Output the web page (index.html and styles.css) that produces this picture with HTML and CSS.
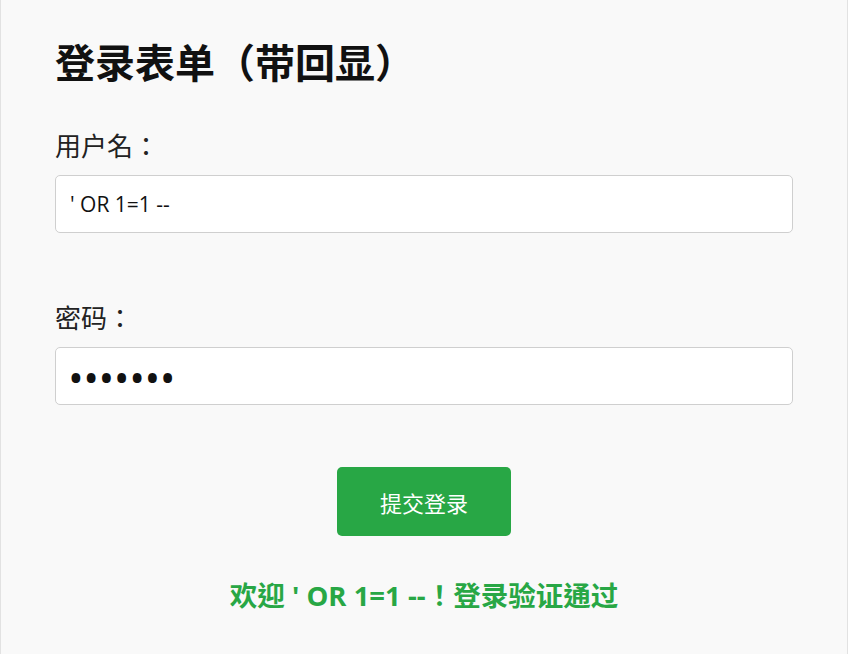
FILE: index.html
```html
<!DOCTYPE html>
<html>
<head>
    <meta charset="utf-8">
    <title>登录表单（带回显）</title>
    <link rel="stylesheet" href="styles.css">
</head>
<body>
    <div class="card">
        <h2 class="title">登录表单（带回显）</h2>
        <form class="login-form">
            <div class="form-group">
                <label for="username">用户名：</label>
                <input type="text" id="username" value="' OR 1=1 --">
            </div>
            <div class="form-group">
                <label for="password">密码：</label>
                <input type="password" id="password" class="pwd" value="1234567">
            </div>
            <button type="submit">提交登录</button>
        </form>
        <p class="result">欢迎 ' OR 1=1 --！登录验证通过</p>
    </div>
</body>
</html>
```

FILE: styles.css
```css
body {
    margin: 0;
    background: #fff;
    font-family: "Open Sans", "Noto Sans CJK TC", sans-serif;
    text-spacing-trim: space-all;
}
.card {
    width: 848px;
    min-height: 100vh;
    box-sizing: border-box;
    padding: 37px 54px 40px;
    background: #f9f9f9;
    border-left: 1px solid #e2e2e2;
    border-right: 1px solid #e2e2e2;
}
.title {
    margin: 0 0 44px;
    font-family: "Noto Sans CJK TC", sans-serif;
    font-size: 40px;
    line-height: 48px;
    font-weight: bold;
    color: #111;
}
.form-group { margin-bottom: 68px; }
.form-group:last-of-type { margin-bottom: 62px; }
label {
    display: block;
    margin-bottom: 15px;
    font-family: "Noto Sans CJK TC", sans-serif;
    font-size: 26px;
    line-height: 31px;
    color: #222;
}
input {
    display: block;
    width: 100%;
    height: 58px;
    box-sizing: border-box;
    padding: 0 14px;
    font-family: inherit;
    font-size: 21px;
    color: #111;
    background: #fff;
    border: 1px solid #cfcfcf;
    border-radius: 5px;
}
.pwd {
    font-size: 42px;
    letter-spacing: -0.5px;
    padding-left: 12px;
}
button {
    display: block;
    margin: 0 auto;
    width: 174px;
    height: 69px;
    font-family: "Noto Sans CJK TC", sans-serif;
    font-size: 22px;
    color: #fff;
    background: #28a745;
    border: none;
    border-radius: 5px;
    cursor: pointer;
}
.result {
    margin: 44px 0 0;
    text-align: center;
    font-size: 27.5px;
    line-height: 31px;
    font-weight: bold;
    color: #28a745;
}
```
